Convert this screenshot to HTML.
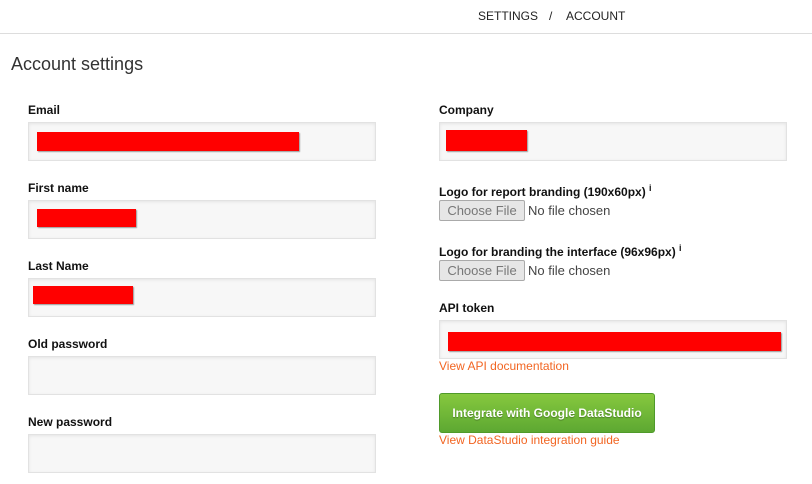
<!DOCTYPE html>
<html><head><style>
body{margin:0;width:812px;height:484px;background:#fff;font-family:"Liberation Sans",Arial,sans-serif;position:relative;overflow:hidden}
.a{position:absolute}
.top{left:0;top:33px;width:812px;height:1px;background:#ddd}
.lb{font-weight:bold;font-size:12px;color:#111;line-height:14px}
.in{background:#f7f7f7;border:1px solid #e2e2e2;box-shadow:inset 0 1px 3px rgba(0,0,0,.08);box-sizing:border-box;height:39px}
.r{background:#f00;box-shadow:1px 1px 1px #999}
.btn{background:#e6e6e6;border:1px solid #aaa;border-radius:2px;box-sizing:border-box;width:86px;height:21px;font-size:13px;color:#777;text-align:center;line-height:19px}
.nf{font-size:13px;color:#444}
.lk{font-size:12px;color:#f26522}
sup{font-size:9px}
</style></head><body>
<div class="a" style="left:478px;top:9px;font-size:12px;color:#222">SETTINGS</div>
<div class="a" style="left:549px;top:9px;font-size:12px;color:#222">/</div>
<div class="a" style="left:566px;top:9px;font-size:12px;color:#222">ACCOUNT</div>
<div class="a top"></div>
<div class="a" style="left:11px;top:54px;font-size:18px;color:#333">Account settings</div>

<div class="a lb" style="left:28px;top:103px">Email</div>
<div class="a in" style="left:28px;top:122px;width:348px"></div>
<div class="a r" style="left:37px;top:132px;width:262px;height:19px"></div>
<div class="a lb" style="left:28px;top:181px">First name</div>
<div class="a in" style="left:28px;top:200px;width:348px"></div>
<div class="a r" style="left:37px;top:209px;width:99px;height:18px"></div>
<div class="a lb" style="left:28px;top:259px">Last Name</div>
<div class="a in" style="left:28px;top:278px;width:348px"></div>
<div class="a r" style="left:33px;top:286px;width:100px;height:18px"></div>
<div class="a lb" style="left:28px;top:337px">Old password</div>
<div class="a in" style="left:28px;top:356px;width:348px"></div>
<div class="a lb" style="left:28px;top:415px">New password</div>
<div class="a in" style="left:28px;top:434px;width:348px"></div>

<div class="a lb" style="left:439px;top:103px">Company</div>
<div class="a in" style="left:439px;top:122px;width:348px"></div>
<div class="a r" style="left:446px;top:130px;width:81px;height:21px"></div>
<div class="a lb" style="left:439px;top:181px">Logo for report branding (190x60px) <sup>i</sup></div>
<div class="a btn" style="left:439px;top:200px">Choose File</div>
<div class="a nf" style="left:528px;top:203px">No file chosen</div>
<div class="a lb" style="left:439px;top:241px">Logo for branding the interface (96x96px) <sup>i</sup></div>
<div class="a btn" style="left:439px;top:260px">Choose File</div>
<div class="a nf" style="left:528px;top:263px">No file chosen</div>
<div class="a lb" style="left:439px;top:301px">API token</div>
<div class="a in" style="left:439px;top:320px;width:348px"></div>
<div class="a r" style="left:448px;top:332px;width:333px;height:19px"></div>
<div class="a lk" style="left:439px;top:359px">View API documentation</div>
<div class="a" style="left:439px;top:393px;width:216px;height:40px;box-sizing:border-box;border:1px solid #4f9a2a;border-radius:3px;background:linear-gradient(#86c83e,#5da832);color:#fff;font-weight:bold;font-size:12px;text-align:center;line-height:38px;text-shadow:0 1px 1px rgba(0,0,0,.3)">Integrate with Google DataStudio</div>
<div class="a lk" style="left:439px;top:433px">View DataStudio integration guide</div>
</body></html>
